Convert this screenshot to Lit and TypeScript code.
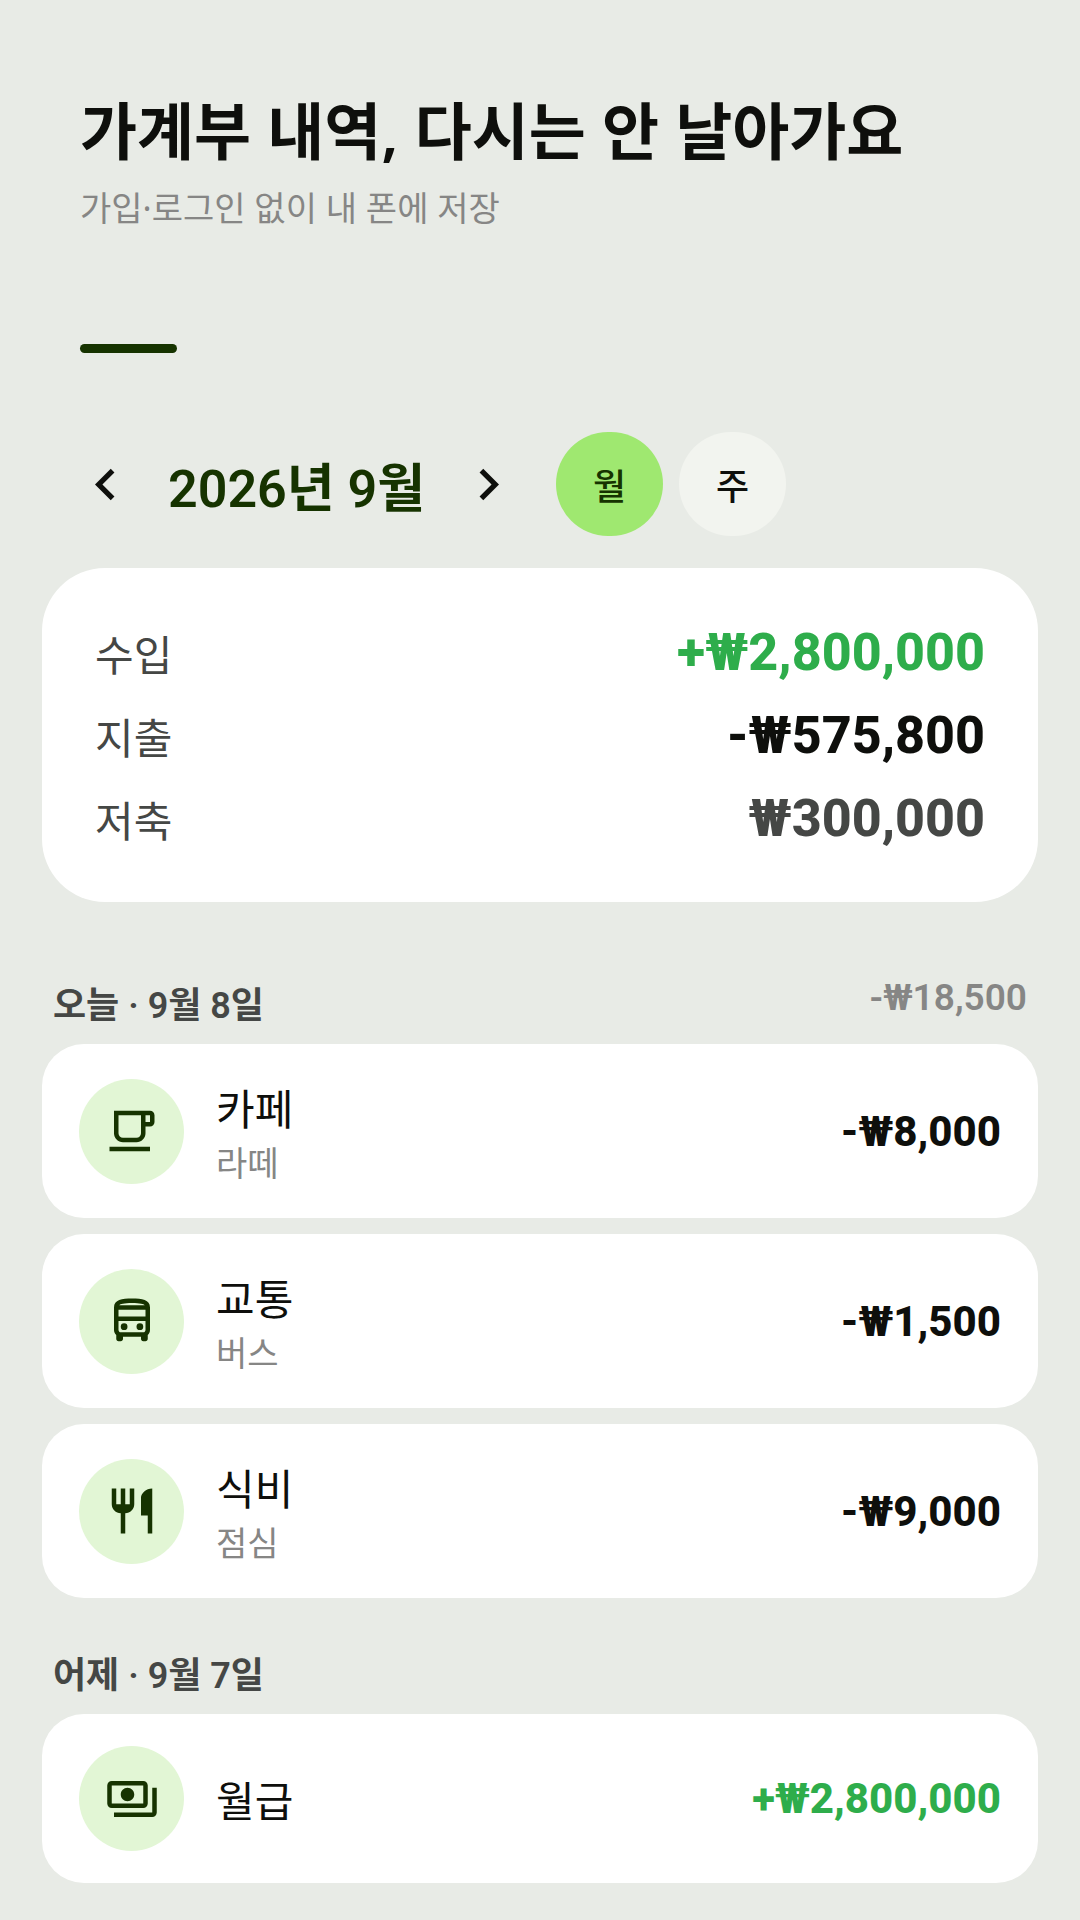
import { LitElement, html, css, svg } from "lit";
import { customElement, property, state } from "lit/decorators.js";

type Tone = "income" | "expense" | "saving";

interface Entry {
  icon: string;
  title: string;
  memo?: string;
  amount: string;
  tone: Tone;
}

interface Day {
  label: string;
  total?: string;
  entries: Entry[];
}

const ICONS: Record<string, unknown> = {
  left: svg`<path d="M15.41 7.41 14 6l-6 6 6 6 1.41-1.41L10.83 12z"/>`,
  right: svg`<path d="M10 6 8.59 7.41 13.17 12l-4.58 4.59L10 18l6-6z"/>`,
  cafe: svg`<path d="M16 5v8c0 1.1-.9 2-2 2H8c-1.1 0-2-.9-2-2V5h10m4-2H4v10c0 2.21 1.79 4 4 4h6c2.21 0 4-1.79 4-4v-3h2c1.11 0 2-.89 2-2V5c0-1.11-.89-2-2-2zm-2 5V5h2v3h-2zm2 11H2v2h18v-2z"/>`,
  bus: svg`<path d="M12 2c-4.42 0-8 .5-8 4v10c0 .88.39 1.67 1 2.22V20c0 .55.45 1 1 1h1c.55 0 1-.45 1-1v-1h8v1c0 .55.45 1 1 1h1c.55 0 1-.45 1-1v-1.78c.61-.55 1-1.34 1-2.22V6c0-3.5-3.58-4-8-4zm5.66 2.99H6.34C6.89 4.46 8.31 4 12 4s5.11.46 5.66.99zm.34 2V10H6V6.99h12zm-.34 9.74-.29.27H6.63l-.29-.27C6.21 16.62 6 16.37 6 16v-4h12v4c0 .37-.21.62-.34.73z"/><circle cx="8.5" cy="14.5" r="1.5"/><circle cx="15.5" cy="14.5" r="1.5"/>`,
  meal: svg`<path d="M16 6v8h3v8h2V2c-2.76 0-5 2.24-5 4zm-5 3H9V2H7v7H5V2H3v7c0 2.21 1.79 4 4 4v9h2v-9c2.21 0 4-1.79 4-4V2h-2v7z"/>`,
  pay: svg`<path d="M19 14V6c0-1.1-.9-2-2-2H3c-1.1 0-2 .9-2 2v8c0 1.1.9 2 2 2h14c1.1 0 2-.9 2-2zm-2 0H3V6h14v8zm-7-7c-1.66 0-3 1.34-3 3s1.34 3 3 3 3-1.34 3-3-1.34-3-3-3zm13 0v11c0 1.1-.9 2-2 2H4v-2h17V7h2z"/>`,
};

const icon = (name: string) =>
  html`<svg class="icon" viewBox="0 0 24 24" aria-hidden="true">${ICONS[name]}</svg>`;

const SUMMARY: { label: string; amount: string; tone: Tone }[] = [
  { label: "수입", amount: "+₩2,800,000", tone: "income" },
  { label: "지출", amount: "-₩575,800", tone: "expense" },
  { label: "저축", amount: "₩300,000", tone: "saving" },
];

const DAYS: Day[] = [
  {
    label: "오늘 · 9월 8일",
    total: "-₩18,500",
    entries: [
      { icon: "cafe", title: "카페", memo: "라떼", amount: "-₩8,000", tone: "expense" },
      { icon: "bus", title: "교통", memo: "버스", amount: "-₩1,500", tone: "expense" },
      { icon: "meal", title: "식비", memo: "점심", amount: "-₩9,000", tone: "expense" },
    ],
  },
  {
    label: "어제 · 9월 7일",
    entries: [{ icon: "pay", title: "월급", amount: "+₩2,800,000", tone: "income" }],
  },
];

@customElement("ledger-entry")
class LedgerEntry extends LitElement {
  @property({ attribute: false }) entry!: Entry;

  static styles = css`
    :host {
      display: flex;
      align-items: center;
      gap: 32px;
      padding: 32px 37px;
      border-radius: 42px;
      background: #fff;
    }
    .badge {
      display: grid;
      place-items: center;
      flex: none;
      width: 105px;
      height: 105px;
      border-radius: 50%;
      background: #e2f6d5;
    }
    .icon {
      display: block;
      width: 54px;
      height: 54px;
      fill: #163300;
    }
    .names {
      flex: 1;
      min-width: 0;
      font-family: "Noto Sans CJK KR", sans-serif;
    }
    .title,
    .memo {
      margin: 0;
    }
    .title {
      font-size: 42px;
      line-height: 61px;
      color: #0e0f0c;
    }
    .memo {
      font-size: 34px;
      line-height: 49px;
      color: #868685;
    }
    .amount {
      font-size: 42px;
      font-weight: 800;
      white-space: nowrap;
    }
    .income {
      color: #2ead4b;
    }
    .expense {
      color: #0e0f0c;
    }
  `;

  render() {
    const e = this.entry;
    return html`
      <span class="badge">${icon(e.icon)}</span>
      <div class="names">
        <p class="title">${e.title}</p>
        ${e.memo ? html`<p class="memo">${e.memo}</p>` : null}
      </div>
      <span class="amount ${e.tone}">${e.amount}</span>
    `;
  }
}

@customElement("app-root")
class AppRoot extends LitElement {
  @state() private period = "월";

  static styles = css`
    :host {
      display: block;
      box-sizing: border-box;
      min-height: 100vh;
      padding: 89px 42px 37px;
      background: #e8ebe6;
      color: #0e0f0c;
      font-family: Roboto, "Noto Sans CJK KR", sans-serif;
    }
    .intro {
      padding: 0 38px;
      font-family: "Noto Sans", "Noto Sans CJK KR", sans-serif;
    }
    .headline {
      margin: 0;
      font-size: 62px;
      font-weight: 600;
      line-height: 84px;
    }
    .tagline {
      margin: 11px 0 0;
      font-size: 34px;
      line-height: 48px;
      color: #868685;
    }
    .rule {
      width: 97px;
      height: 9px;
      margin-top: 112px;
      border-radius: 5px;
      background: #163300;
    }
    .period {
      display: flex;
      align-items: center;
      margin-top: 79px;
    }
    button {
      padding: 0;
      border: 0;
      color: inherit;
      font: inherit;
      cursor: pointer;
    }
    .step {
      display: grid;
      place-items: center;
      width: 126px;
      height: 104px;
      background: none;
    }
    .icon {
      display: block;
      width: 63px;
      height: 63px;
      fill: #0e0f0c;
    }
    .month {
      margin: 0;
      font-size: 52px;
      font-weight: 600;
      color: #163300;
    }
    .toggle {
      display: flex;
      gap: 16px;
      margin-left: 5px;
    }
    .choice {
      width: 107px;
      height: 104px;
      border-radius: 52px;
      background: #f2f4ef;
      font-family: "Noto Sans CJK KR", sans-serif;
      font-size: 36px;
      font-weight: 500;
    }
    .choice[aria-pressed="true"] {
      background: #9fe870;
      color: #163300;
    }
    .summary {
      margin: 32px 0 0;
      padding: 43px 53px 42px;
      border-radius: 63px;
      background: #fff;
    }
    .line {
      display: flex;
      align-items: center;
      justify-content: space-between;
      height: 83px;
    }
    .label {
      font-family: "Noto Sans CJK KR", sans-serif;
      font-size: 42px;
      color: #454745;
    }
    .amount {
      margin: 0;
      font-size: 52px;
      font-weight: 800;
    }
    .income {
      color: #2ead4b;
    }
    .saving {
      color: #454745;
    }
    .day {
      margin-top: 48px;
    }
    .summary + .day {
      margin-top: 74px;
    }
    .dayhead {
      display: flex;
      align-items: flex-start;
      justify-content: space-between;
      padding: 0 11px;
      font-size: 36px;
      font-weight: 600;
    }
    .date {
      margin: 0;
      font: inherit;
      color: #454745;
    }
    .total {
      font-size: 37px;
      color: #868685;
    }
    .entries {
      display: grid;
      gap: 16px;
      margin: 16px 0 0;
      padding: 0;
      list-style: none;
    }
  `;

  private choice(name: string) {
    return html`<button
      class="choice"
      type="button"
      aria-pressed=${this.period === name ? "true" : "false"}
      @click=${() => (this.period = name)}
    >${name}</button>`;
  }

  render() {
    return html`
      <header class="intro">
        <h1 class="headline">가계부 내역, 다시는 안 날아가요</h1>
        <p class="tagline">가입·로그인 없이 내 폰에 저장</p>
        <div class="rule"></div>
      </header>
      <nav class="period">
        <button class="step" type="button" aria-label="이전">${icon("left")}</button>
        <h2 class="month">2026년 9월</h2>
        <button class="step" type="button" aria-label="다음">${icon("right")}</button>
        <div class="toggle">${this.choice("월")}${this.choice("주")}</div>
      </nav>
      <dl class="summary">
        ${SUMMARY.map(
          (s) => html`<div class="line">
            <dt class="label">${s.label}</dt>
            <dd class="amount ${s.tone}">${s.amount}</dd>
          </div>`
        )}
      </dl>
      ${DAYS.map(
        (d) => html`<section class="day">
          <div class="dayhead">
            <h3 class="date">${d.label}</h3>
            ${d.total ? html`<span class="total">${d.total}</span>` : null}
          </div>
          <ul class="entries">
            ${d.entries.map((e) => html`<li><ledger-entry .entry=${e}></ledger-entry></li>`)}
          </ul>
        </section>`
      )}
    `;
  }
}
